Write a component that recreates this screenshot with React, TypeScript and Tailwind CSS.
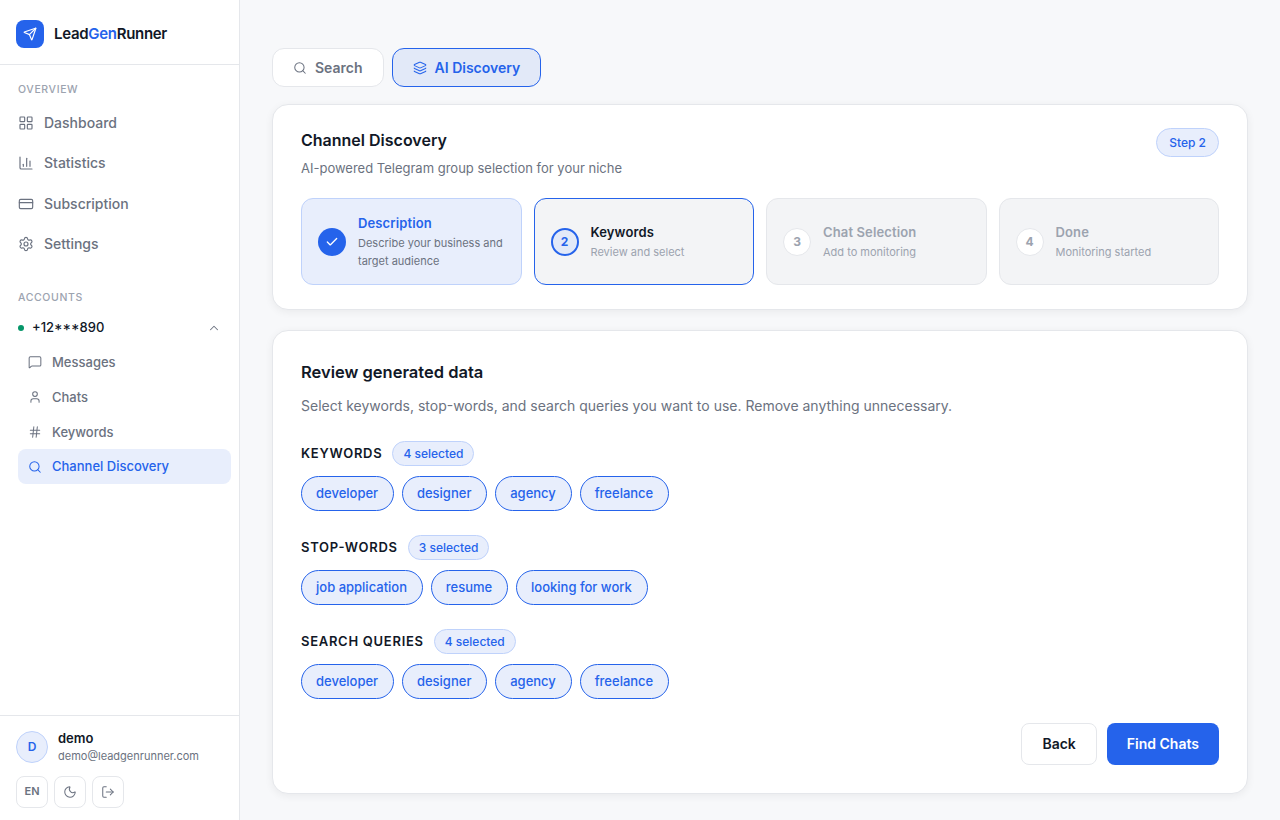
import { ChartColumn, Check, ChevronUp, CreditCard, Hash, Layers, LayoutGrid, LogOut, MessageSquare, Moon, Search, Send, Settings, User } from "lucide-react";
import type { ReactNode } from "react";

const overview = [
  { label: "Dashboard", icon: LayoutGrid },
  { label: "Statistics", icon: ChartColumn },
  { label: "Subscription", icon: CreditCard },
  { label: "Settings", icon: Settings },
];

const accountLinks = [
  { label: "Messages", icon: MessageSquare },
  { label: "Chats", icon: User },
  { label: "Keywords", icon: Hash },
  { label: "Channel Discovery", icon: Search, active: true },
];

const groups = [
  { title: "Keywords", count: 4, items: ["developer", "designer", "agency", "freelance"] },
  { title: "Stop-words", count: 3, items: ["job application", "resume", "looking for work"] },
  { title: "Search queries", count: 4, items: ["developer", "designer", "agency", "freelance"] },
];

function SectionLabel({ children }: { children: ReactNode }) {
  return <div className="px-[18px] text-[10.5px] font-medium uppercase tracking-[0.06em] text-[#9ca3af]">{children}</div>;
}

function Sidebar() {
  return (
    <aside className="flex w-[240px] shrink-0 flex-col border-r border-[#e5e7eb] bg-white">
      <div className="flex h-[65px] items-center gap-[10px] border-b border-[#e5e7eb] px-4 pt-1">
        <div className="flex h-7 w-7 items-center justify-center rounded-lg bg-[#2563eb]">
          <Send size={14} className="text-white" strokeWidth={2} />
        </div>
        <div className="text-[15px] font-semibold tracking-[-0.02em] text-[#111827]">
          Lead<span className="text-[#2563eb]">Gen</span>Runner
        </div>
      </div>
      <div className="pt-[17px]"><SectionLabel>Overview</SectionLabel></div>
      <nav className="mt-[5.8px] flex flex-col">
        {overview.map((item) => (
          <div className="flex items-center gap-[10px] px-[18px] py-[10px] text-[14px] font-medium text-[#6b7280]" key={item.label}>
            <item.icon size={16} strokeWidth={1.75} />
            {item.label}
          </div>
        ))}
      </nav>
      <div className="mt-[26.2px]"><SectionLabel>Accounts</SectionLabel></div>
      <div className="mt-[4.5px] flex items-center px-[18px] py-2">
        <span className="h-[6px] w-[6px] rounded-full bg-[#059669]" />
        <span className="ml-2 text-[13px] font-medium text-[#111827]">+12***890</span>
        <ChevronUp size={14} className="ml-auto text-[#6b7280]" strokeWidth={1.75} />
      </div>
      <div className="flex flex-col pl-[18px] pr-2">
        {accountLinks.map((item) => (
          <div
            className={item.active
              ? "flex items-center gap-[10px] rounded-lg bg-[#e8eefc] px-[10px] py-2 text-[13px] font-medium text-[#2563eb]"
              : "flex items-center gap-[10px] rounded-lg px-[10px] py-2 text-[13px] font-medium text-[#6b7280]"}
            key={item.label}
          >
            <item.icon size={14} strokeWidth={1.75} />
            {item.label}
          </div>
        ))}
      </div>
      <div className="mt-auto border-t border-[#e5e7eb] px-4 pb-3 pt-[13px]">
        <div className="flex items-center gap-[10px]">
          <div className="flex h-8 w-8 items-center justify-center rounded-full border border-[#bfd2fb] bg-[#e8eefc] text-[12px] font-semibold text-[#2563eb]">D</div>
          <div>
            <div className="text-[13px] font-semibold text-[#111827]">demo</div>
            <div className="mt-px text-[11px] text-[#6b7280]">demo@leadgenrunner.com</div>
          </div>
        </div>
        <div className="mt-[11px] flex gap-[6px]">
          <div className="flex h-8 w-8 items-center justify-center rounded-lg border border-[#e5e7eb] text-[11px] font-semibold text-[#6b7280]">EN</div>
          <div className="flex h-8 w-8 items-center justify-center rounded-lg border border-[#e5e7eb] text-[#6b7280]"><Moon size={14} strokeWidth={1.75} /></div>
          <div className="flex h-8 w-8 items-center justify-center rounded-lg border border-[#e5e7eb] text-[#6b7280]"><LogOut size={14} strokeWidth={1.75} /></div>
        </div>
      </div>
    </aside>
  );
}

function StepCard({ n, title, text, state }: { n: number; title: string; text: ReactNode; state: "done" | "current" | "todo" }) {
  const box = {
    done: "border-[#bfd2fb] bg-[#e8eefc]",
    current: "border-[#2563eb] bg-[#f3f4f6]",
    todo: "border-[#e5e7eb] bg-[#f3f4f6]",
  }[state];
  const circle = {
    done: "bg-[#2563eb] text-white",
    current: "border-2 border-[#2563eb] bg-[#e2e9f8] text-[#2563eb]",
    todo: "border border-[#e5e7eb] bg-white text-[#9ca3af]",
  }[state];
  const titleColor = { done: "text-[#2563eb]", current: "text-[#111827]", todo: "text-[#9ca3af]" }[state];
  const textColor = state === "done" ? "text-[#6b7280]" : "text-[#9ca3af]";
  return (
    <div className={`flex h-[87px] items-center gap-3 rounded-xl border px-4 ${box}`}>
      <div className={`flex h-7 w-7 shrink-0 items-center justify-center rounded-full text-[12px] font-bold ${circle}`}>
        {state === "done" ? <Check size={14} strokeWidth={2.25} /> : n}
      </div>
      <div className="min-w-0 pt-px">
        <div className={`text-[13px] font-semibold tracking-[0.01em] ${titleColor}`}>{title}</div>
        <div className={`mt-[1.5px] text-[11px] leading-[18px] ${textColor}`}>{text}</div>
      </div>
    </div>
  );
}

function ChipGroup({ title, count, items }: { title: string; count: number; items: string[] }) {
  return (
    <div>
      <div className="flex items-center gap-[10px]">
        <div className="text-[13px] font-semibold uppercase tracking-[0.055em] text-[#111827]">{title}</div>
        <div className="flex h-[25px] items-center rounded-full border border-[#bfd2fb] bg-[#e8eefc] px-[10px] text-[12px] font-medium text-[#2563eb]">{count} selected</div>
      </div>
      <div className="mt-[10px] flex gap-2">
        {items.map((item) => (
          <div className="flex h-[35px] items-center rounded-full border border-[#2563eb] bg-[#e8eefc] pl-[14px] pr-[14.8px] text-[13px] font-medium text-[#2563eb]" key={item}>{item}</div>
        ))}
      </div>
    </div>
  );
}

export default function App() {
  return (
    <div className="flex h-[820px] overflow-hidden bg-[#f7f8fa] font-['Inter',sans-serif] leading-[1.45] [font-feature-settings:'kern','liga','calt','case']">
      <Sidebar />
      <main className="flex-1 px-8 pt-12">
        <div className="flex gap-2">
          <div className="flex h-[39px] items-center gap-2 rounded-xl border border-[#e5e7eb] bg-white px-5 text-[14px] leading-5 font-semibold text-[#6b7280]">
            <Search size={14} strokeWidth={1.75} />Search
          </div>
          <div className="flex h-[39px] items-center gap-2 rounded-xl border border-[#2563eb] bg-[#e2e9f8] px-5 text-[14px] leading-5 font-semibold text-[#2563eb]">
            <Layers size={14} strokeWidth={1.75} />AI Discovery
          </div>
        </div>
        <section className="mt-[17px] rounded-2xl border border-[#e5e7eb] bg-white px-7 pb-6 pt-[23px] shadow-[0_2px_8px_rgba(0,0,0,0.06)]">
          <div className="flex items-start justify-between">
            <div className="pt-px">
              <h1 className="text-[16px] font-semibold text-[#111827]">Channel Discovery</h1>
              <p className="mt-[7px] text-[13px] text-[#6b7280]">AI-powered Telegram group selection for your niche</p>
            </div>
            <div className="rounded-full border border-[#bfd2fb] bg-[#e8eefc] px-3 py-[5px] text-[12px] font-medium text-[#2563eb]">Step 2</div>
          </div>
          <div className="mt-5 grid grid-cols-4 gap-3">
            <StepCard n={1} state="done" title="Description" text="Describe your business and target audience" />
            <StepCard n={2} state="current" title="Keywords" text="Review and select" />
            <StepCard n={3} state="todo" title="Chat Selection" text="Add to monitoring" />
            <StepCard n={4} state="todo" title="Done" text="Monitoring started" />
          </div>
        </section>
        <section className="mt-5 rounded-2xl border border-[#e5e7eb] bg-white px-7 pb-7 pt-[29px] shadow-[0_2px_8px_rgba(0,0,0,0.06)]">
          <h2 className="pt-px text-[16.5px] font-semibold text-[#111827]">Review generated data</h2>
          <p className="mt-[11px] text-[14px] text-[#6b7280]">Select keywords, stop-words, and search queries you want to use. Remove anything unnecessary.</p>
          <div className="mt-[25px] flex flex-col gap-6">
            {groups.map((group) => <ChipGroup {...group} key={group.title} />)}
          </div>
          <div className="mt-6 flex justify-end gap-[10px]">
            <div className="flex h-[42px] items-center rounded-lg border border-[#e5e7eb] bg-white px-5 text-[14px] leading-5 font-semibold text-[#111827]">Back</div>
            <div className="flex h-[42px] items-center rounded-lg bg-[#2563eb] px-5 text-[14px] leading-5 font-semibold text-white">Find Chats</div>
          </div>
        </section>
      </main>
    </div>
  );
}
